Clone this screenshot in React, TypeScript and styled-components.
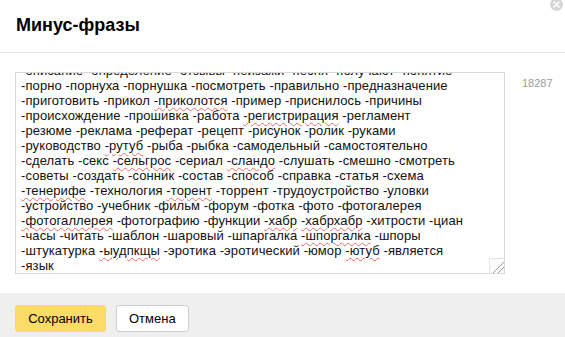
import { useLayoutEffect, useRef } from 'react';
import styled, { createGlobalStyle } from 'styled-components';

const GlobalStyle = createGlobalStyle`
  html, body {
    margin: 0;
    padding: 0;
    background: #fff;
    font-family: "Liberation Sans", Arial, sans-serif;
  }
`;

// words marked by the spell checker in the reference
const misspelled = new Set([
  '-приколотся',
  '-регистрирация',
  '-рутуб',
  '-сельгрос',
  '-сландо',
  '-тенерифе',
  '-торент',
  '-фотогаллерея',
  '-хабр',
  '-хабрхабр',
  '-шпоргалка',
  '-ыудпкщы',
  '-ютуб',
]);

const lines = [
  '-10 -100 -2 -2012 -2013 -3 -5 -7 -a -about -adobe -apple -art -auto',
  '-best -bmw -cad -car -club -com -cs -dota -drive -dvd -exe -fb -film',
  '-flash -forum -game -games -gif -gta -help -how -icon -img -java -key',
  '-kino -life -linux -mac -map -mods -moto -music -net -new -news -ok',
  '-olx -org -ps -psd -rar -rus -sale -sex -shop -site -soft -sony -sport',
  '-team -test -tv -usb -vip -vkontakte -web -win -xbox -xp -yandex -zip',
  '-2014 -2015 -2016 -2017 -2018 -3d -4pda -apk -avito -android -blog -book',
  '-download -ebay -free -google -hd -html -instagram -ios -jpg -mail -mp3',
  '-mp4 -online -pdf -photo -png -ru -skachat -torrent -video -vk -wiki',
  '-windows -word -youtube -авито -автомобиль -адрес -аккорды -анализ',
  '-английский -аниме -арт -архив -аудиокнига -база -банк -без -бесплатно',
  '-бесплатный -библиотека -биография -блог -большой -будет -быстро -в',
  '-вакансии -варианты -вдохновение -видео -видеоурок -википедия -вк',
  '-вконтакте -вопросы -время -все -выбор -выкройка -выучить -где -гдз',
  '-генератор -гифки -глава -год -город -гост -готовый -гугл -дача -даты',
  '-движение -девушки -дети -детский -дешево -для -дневник -доклад -дом',
  '-домашний -дорама -достоинства -драйвер -его -европа -жанр -женский',
  '-животные -журнал -за -зачем -заявление -звук -здоровье -значение -игра',
  '-игры -идеи -из -изображение -инструкция -интересные -интернет -история',
  '-как -какие -калькулятор -карта -картинки -каталог -кино -книга -когда',
  '-коды -комментарии -композиция -конкурс -конспект -контрольная -копия',
  '-красивые -кратко -кроссворд -купить -курсовая -лекция -лучшие -любовь',
  '-магазин -мастер -материал -медленно -метод -минус -мини -модель -может',
  '-можно -мой -москва -мультфильм -музыка -мы -на -навык -надо -найти',
  '-наказание -написать -нарисовать -настройка -не -небольшой -новости',
  '-новые -ноты -о -обзор -образец -обучение -объяснение -одежда -онлайн',
  '-описание -определение -отзывы -пейзажи -песня -получают -понятие',
  '-порно -порнуха -порнушка -посмотреть -правильно -предназначение',
  '-приготовить -прикол -приколотся -пример -приснилось -причины',
  '-происхождение -прошивка -работа -регистрирация -регламент',
  '-резюме -реклама -реферат -рецепт -рисунок -ролик -руками',
  '-руководство -рутуб -рыба -рыбка -самодельный -самостоятельно',
  '-сделать -секс -сельгрос -сериал -сландо -слушать -смешно -смотреть',
  '-советы -создать -сонник -состав -способ -справка -статья -схема',
  '-тенерифе -технология -торент -торрент -трудоустройство -уловки',
  '-устройство -учебник -фильм -форум -фотка -фото -фотогалерея',
  '-фотогаллерея -фотографию -функции -хабр -хабрхабр -хитрости -циан',
  '-часы -читать -шаблон -шаровый -шпаргалка -шпоргалка -шпоры',
  '-штукатурка -ыудпкщы -эротика -эротический -юмор -ютуб -является',
  '-язык',
];

export default function App() {
  const areaRef = useRef<HTMLDivElement>(null);

  useLayoutEffect(() => {
    const el = areaRef.current;
    if (el) el.scrollTop = el.scrollHeight;
  }, []);

  return (
    <Dialog>
      <GlobalStyle />
      <CloseButton aria-label="Закрыть">
        <svg width="13" height="13" viewBox="0 0 13 13">
          <circle cx="6.5" cy="6.5" r="6.5" fill="#d6d6d6" />
          <path d="M4 4l5 5M9 4l-5 5" stroke="#fff" strokeWidth="1.6" strokeLinecap="round" />
        </svg>
      </CloseButton>
      <Header>
        <Title>Минус-фразы</Title>
      </Header>
      <Body>
        <Editor ref={areaRef} role="textbox" aria-multiline="true">
          {lines.map((line, i) => (
            <Line key={i}>
              {line.split(' ').map((word, j) => (
                <span key={j}>
                  {j > 0 && ' '}
                  {misspelled.has(word) ? <Typo>{word}</Typo> : word}
                </span>
              ))}
            </Line>
          ))}
        </Editor>
        <Counter>18287</Counter>
      </Body>
      <Footer>
        <Button $primary>Сохранить</Button>
        <Button>Отмена</Button>
      </Footer>
    </Dialog>
  );
}

const Dialog = styled.div`
  position: relative;
  width: 565px;
  height: 337px;
  display: flex;
  flex-direction: column;
  background: #fff;
  overflow: hidden;
`;

const CloseButton = styled.button`
  position: absolute;
  top: -2px;
  right: 2px;
  padding: 0;
  border: 0;
  background: none;
  line-height: 0;
  cursor: pointer;
`;

const Header = styled.div`
  height: 53px;
  box-sizing: border-box;
  display: flex;
  align-items: center;
  padding: 0 16px 1px;
  border-bottom: 1px solid #e6e6e6;
`;

const Title = styled.h1`
  margin: 0;
  font-size: 18px;
  font-weight: bold;
  color: #000;
`;

const Body = styled.div`
  display: flex;
  align-items: flex-start;
  padding: 19px 0 0 15px;
  height: 220px;
  box-sizing: border-box;
`;

const Editor = styled.div`
  width: 490px;
  height: 202px;
  box-sizing: border-box;
  border: 1px solid #d9d9d9;
  padding: 0 4px 0 5px;
  overflow-y: scroll;
  resize: vertical;
  font-size: 13px;
  letter-spacing: 0.1px;
  line-height: 15px;
  color: #111;

  &::-webkit-scrollbar {
    width: 17px;
  }
  &::-webkit-scrollbar-track {
    background: #fbfbfb;
    border-left: 1px solid #e4e4e4;
  }
  &::-webkit-scrollbar-thumb {
    background: #c1c1c1;
    border-radius: 6px;
    border: 4px solid transparent;
    border-left-width: 5px;
    background-clip: padding-box;
  }
  &::-webkit-resizer {
    background-color: #fbfbfb;
    background-image: linear-gradient(
      135deg,
      transparent 0 58%,
      #9a9a9a 58% 63%,
      transparent 63% 76%,
      #9a9a9a 76% 81%,
      transparent 81%
    );
    border-top: 1px solid #e4e4e4;
    border-left: 1px solid #e4e4e4;
  }
`;

const Line = styled.div`
  white-space: nowrap;
`;

const Typo = styled.span`
  text-decoration: underline wavy rgba(228, 70, 60, 0.75);
  text-decoration-thickness: 1px;
  text-underline-offset: 2px;
`;

const Counter = styled.div`
  margin: 5px 0 0 17px;
  font-size: 11px;
  color: #9b9b9b;
`;

const Footer = styled.div`
  margin-top: auto;
  height: 44px;
  box-sizing: border-box;
  background: #efefef;
  display: flex;
  align-items: flex-start;
  gap: 10px;
  padding: 12px 15px 0;
`;

const Button = styled.button<{ $primary?: boolean }>`
  height: 27px;
  padding: 0 12px;
  min-width: ${(p) => (p.$primary ? '91px' : '72px')};
  box-sizing: border-box;
  border-radius: 3px;
  border: 1px solid ${(p) => (p.$primary ? '#f9d95f' : '#cfcfcf')};
  background: ${(p) => (p.$primary ? '#fbdc69' : '#fff')};
  color: #000;
  font-family: "Liberation Sans", Arial, sans-serif;
  font-size: 13px;
  cursor: pointer;
`;
